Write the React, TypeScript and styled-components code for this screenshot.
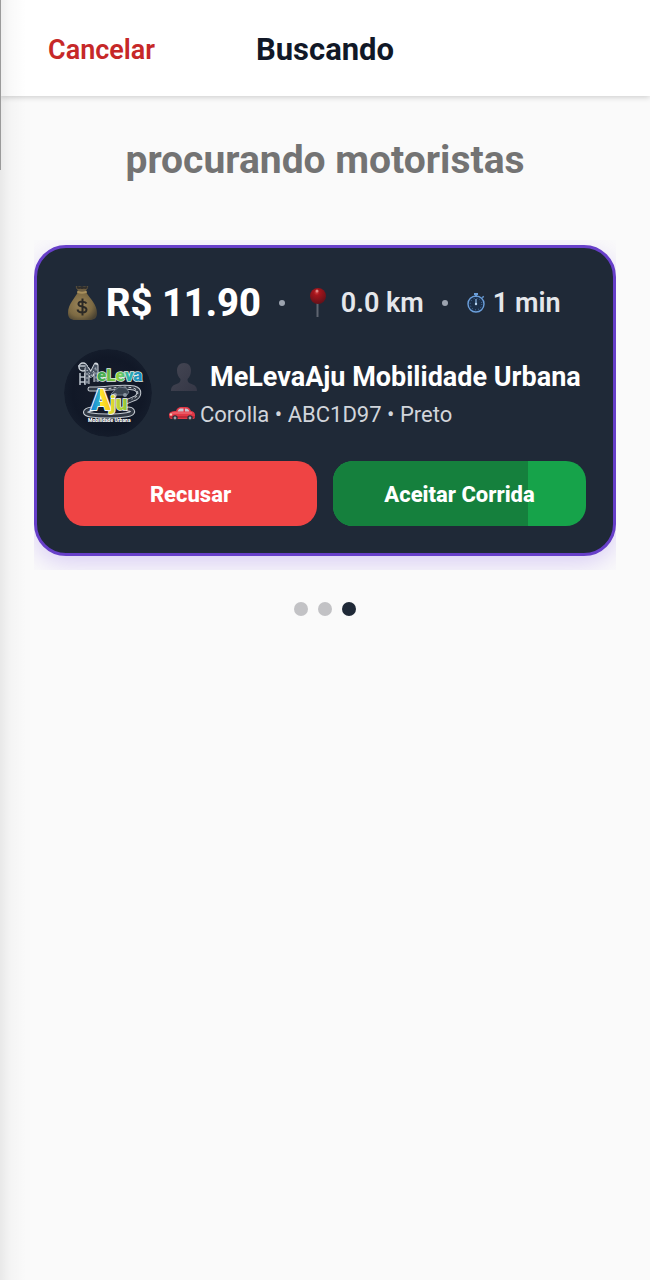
import React from 'react';
import styled, { createGlobalStyle } from 'styled-components';

const ride = {
  price: 'R$ 11.90',
  distance: '0.0 km',
  time: '1 min',
  driver: 'MeLevaAju Mobilidade Urbana',
  vehicle: 'Corolla • ABC1D97 • Preto',
  progress: 77,
};

const App = () => {
  return (
    <>
      <GlobalStyle />
      <Page>
        <Header>
          <CancelButton type="button">Cancelar</CancelButton>
          <HeaderTitle>Buscando</HeaderTitle>
        </Header>
        <Content>
          <SearchTitle>procurando motoristas</SearchTitle>
          <CardSlide>
            <RideCard>
              <SummaryRow>
                <PriceGroup>
                  <MoneyBagIcon />
                  <Price>{ride.price}</Price>
                </PriceGroup>
                <Separator />
                <DistanceGroup>
                  <PinIcon />
                  <Metric>{ride.distance}</Metric>
                </DistanceGroup>
                <Separator />
                <TimeGroup>
                  <StopwatchIcon />
                  <Metric>{ride.time}</Metric>
                </TimeGroup>
              </SummaryRow>
              <DriverRow>
                <DriverLogo />
                <DriverInfo>
                  <NameLine>
                    <PersonIcon />
                    <DriverName>{ride.driver}</DriverName>
                  </NameLine>
                  <VehicleLine>
                    <CarIcon />
                    <span>{ride.vehicle}</span>
                  </VehicleLine>
                </DriverInfo>
              </DriverRow>
              <ActionRow>
                <RefuseButton type="button">Recusar</RefuseButton>
                <AcceptButton type="button">
                  <AcceptProgress style={{ width: `${ride.progress}%` }} />
                  <AcceptLabel>Aceitar Corrida</AcceptLabel>
                </AcceptButton>
              </ActionRow>
            </RideCard>
          </CardSlide>
          <Dots>
            <Dot />
            <Dot />
            <Dot $active />
          </Dots>
        </Content>
        <EdgeShadow />
        <EdgeLine />
      </Page>
    </>
  );
};

export default App;

const MoneyBagIcon = () => (
  <svg width="34" height="38" viewBox="0 0 34 38" aria-hidden="true">
    <defs>
      <radialGradient id="bag" cx="42%" cy="45%" r="65%">
        <stop offset="0" stopColor="#9a8459" />
        <stop offset="0.65" stopColor="#7d6a43" />
        <stop offset="1" stopColor="#4c4433" />
      </radialGradient>
    </defs>
    <path d="M14 8C11 14 4 20 4 29c0 5 3 7 7 7h15c4 0 7-2 7-7 0-9-7-14-11-21z" fill="url(#bag)" />
    <path d="M12 2c2 2 3-1 6 1 3-2 4 1 6-1 1 2-2 3-2 6h-8c0-3-3-4-2-6z" fill="#6c5d41" />
    <path d="M13 3c2 2 3 0 5 1 2-1 4 1 5-1" fill="none" stroke="#2f2d2b" strokeWidth="2" />
    <path d="M14 8c3 1 5 1 8 0" fill="none" stroke="#a8905d" strokeWidth="2" strokeLinecap="round" />
    <path d="M22.500 19.500c-1-2-7-3-8 0-1 4 8 2 8 6 0 4-8 4-9 0M18.500 14.500v17" fill="none" stroke="#2b2925" strokeWidth="2" />
  </svg>
);

const PinIcon = () => (
  <svg width="26" height="34" viewBox="0 0 26 34" aria-hidden="true">
    <defs>
      <radialGradient id="pinHead" cx="42%" cy="28%" r="70%">
        <stop offset="0" stopColor="#d23f40" />
        <stop offset="0.25" stopColor="#a5151b" />
        <stop offset="1" stopColor="#651119" />
      </radialGradient>
    </defs>
    <path d="M14.500 16v15" stroke="#5f6570" strokeWidth="2" />
    <circle cx="15" cy="10" r="8" fill="url(#pinHead)" />
    <circle cx="14" cy="5" r="1.500" fill="#dd8583" />
  </svg>
);

const StopwatchIcon = () => (
  <svg width="20" height="22" viewBox="0 0 20 22" fill="none" aria-hidden="true">
    <circle cx="10" cy="12" r="8" fill="#1b2f4a" stroke="#6b9fdb" strokeWidth="1.400" />
    <path d="M8 2h4M10 2v3M16.500 4.500l1 1" stroke="#6b9fdb" strokeWidth="1.800" />
    <path d="M10 7v5" stroke="#8db8e8" strokeWidth="1.200" />
    <circle cx="10" cy="12" r="1.200" fill="#b9d4f0" />
    <circle cx="10" cy="12" r="5.800" stroke="#5f8ec6" strokeWidth="1" strokeDasharray="0.700 2.337" />
  </svg>
);

const PersonIcon = () => (
  <svg width="30" height="30" viewBox="0 0 30 30" aria-hidden="true">
    <defs>
      <linearGradient id="bust" x1="0" y1="0" x2="1" y2="1">
        <stop offset="0" stopColor="#444653" />
        <stop offset="1" stopColor="#353746" />
      </linearGradient>
    </defs>
    <path
      d="M16 1c-4.500 0-7 3-7 7.500 0 4 1.500 6.500 3.500 8.500 0 3-1 4-4 5C5 23 3 25 3 29h26c0-4-2-6-5.500-7-3-1-4-2-4-5 2-2 3.500-4.500 3.500-8.500C23 4 20.500 1 16 1z"
      fill="url(#bust)"
    />
  </svg>
);

const CarIcon = () => (
  <svg width="28" height="18" viewBox="0 0 28 18" aria-hidden="true">
    <path d="M1 10c0-3 3-4 7-4 1-3 3-4 5-4h5c3 0 4 2 5 4 3 .5 4 2 4 4.500V13c-1 1-2 1-3 1H4c-2 0-3-1-3-4z" fill="#e23846" />
    <path d="M9.500 6.500c1-2.500 2-3 4-3h2v3zM17 3.500c3 0 3.500 1 4.500 3H17z" fill="#c9c5d0" />
    <path d="M4 8h20" stroke="#f27c84" strokeWidth="1" />
    <path d="M1 12h26" stroke="#9a1d2c" strokeWidth="1" />
    <circle cx="7" cy="13" r="2.700" fill="#282c36" />
    <circle cx="7" cy="13" r="1.400" fill="#9ea2aa" />
    <circle cx="22" cy="13" r="2.700" fill="#282c36" />
    <circle cx="22" cy="13" r="1.400" fill="#9ea2aa" />
    <circle cx="3" cy="9.500" r="1.200" fill="#f2c9b8" />
  </svg>
);

const DriverLogo = () => (
  <LogoSvg width="88" height="88" viewBox="0 0 88 88" role="img" aria-label="MeLeva Aju Mobilidade Urbana">
    <defs>
      <radialGradient id="disc">
        <stop offset="0" stopColor="#171d2c" />
        <stop offset="0.8" stopColor="#111827" />
        <stop offset="1" stopColor="#141c2b" />
      </radialGradient>
      <linearGradient id="leva" x1="0" y1="0" x2="1" y2="0">
        <stop offset="0" stopColor="#2e9e57" />
        <stop offset="0.45" stopColor="#8fd03c" />
        <stop offset="0.7" stopColor="#2bb3b0" />
        <stop offset="1" stopColor="#1c7fc4" />
      </linearGradient>
      <linearGradient id="letterA" x1="0" y1="0" x2="1" y2="0">
        <stop offset="0.1" stopColor="#1688d4" />
        <stop offset="0.45" stopColor="#2fb0cf" />
        <stop offset="0.5" stopColor="#ffe62c" />
        <stop offset="1" stopColor="#f7c31c" />
      </linearGradient>
      <linearGradient id="letterJu" x1="0" y1="0" x2="1" y2="0">
        <stop offset="0" stopColor="#f4dc2b" />
        <stop offset="1" stopColor="#8cc63b" />
      </linearGradient>
    </defs>
    <circle cx="44" cy="44" r="44" fill="url(#disc)" />
    {/* road around the lettering */}
    <g fill="none" strokeLinecap="round">
      <path d="M26 40c14 1 32-4 44-1 7 2 6 9-1 11l-7 3M28 60c-8 1-9 5-1 6 12 2 32 1 39-1 5-2 2-5-2-5" stroke="#c4cad1" strokeWidth="5" />
      <path d="M26 40c14 1 32-4 44-1 7 2 6 9-1 11l-7 3M28 60c-8 1-9 5-1 6 12 2 32 1 39-1 5-2 2-5-2-5" stroke="#303844" strokeWidth="3" />
      <path d="M40 40c10-1 20-3 29-1 7 2 6 9-1 11" stroke="#d5d9df" strokeWidth="1" strokeDasharray="2 3" />
    </g>
    {/* driver figure and the road shaped M */}
    <circle cx="19" cy="18" r="4" fill="#313a47" stroke="#cdd3d9" strokeWidth="1.500" />
    <path d="M14 17h10M16 24v12M21 24v12M16 28h5M16 33h5" fill="none" stroke="#b9c1ca" strokeWidth="1.500" />
    <path d="M23 35V20l4 6 5-10v17" fill="none" stroke="#d5dae0" strokeWidth="5" strokeLinejoin="round" />
    <path d="M23 35V20l4 6 5-10v17" fill="none" stroke="#465160" strokeWidth="3" />
    <path d="M23 34V21l4 6 5-9v14" fill="none" stroke="#b6bdc6" strokeWidth="1" strokeDasharray="2 2" />
    <LogoText x="33" y="32" $size={17} fill="url(#leva)" stroke="#e4f2e8" strokeWidth="1.500">
      eLeva
    </LogoText>
    <path d="M47 45l4-4 4-3 7 1 3 4-2 3H48z" fill="#3a4552" stroke="#6d7986" strokeWidth="1" />
    <circle cx="51" cy="46" r="2" fill="#8b96a2" />
    <circle cx="61" cy="46" r="2" fill="#8b96a2" />
    <LogoText x="27" y="61" $size={29} fill="url(#letterA)" stroke="#f1f6f8" strokeWidth="2">
      A
    </LogoText>
    <LogoText x="46" y="61" $size={21} fill="url(#letterJu)" stroke="#f1f6f8" strokeWidth="1.500">
      ju
    </LogoText>
    <LogoText x="24" y="73" $size={5} fill="#ffffff">
      Mobilidade Urbana
    </LogoText>
  </LogoSvg>
);

const GlobalStyle = createGlobalStyle`
  * {
    box-sizing: border-box;
  }

  body {
    margin: 0;
    background-color: #fafafa;
    font-family: Roboto, "Liberation Sans", sans-serif;
  }

  h1, h2, p {
    margin: 0;
  }

  button {
    border: none;
    padding: 0;
    font-family: inherit;
    cursor: pointer;
  }

  svg {
    display: block;
    flex-shrink: 0;
  }
`

const Page = styled.div`
  position: relative;
  width: 100%;
  min-height: 100vh;
  background-color: #fafafa;
`

const Header = styled.header`
  height: 96px;
  padding: 4px 48px 0;
  display: grid;
  grid-template-columns: 1fr auto 1fr;
  align-items: center;
  background-color: #ffffff;
  box-shadow: 0 1px 6px rgba(0, 0, 0, 0.2);
`

const CancelButton = styled.button`
  justify-self: start;
  background: none;
  color: #c62828;
  font-size: 27px;
  font-weight: 600;
  line-height: 32px;
`

const HeaderTitle = styled.h1`
  color: #111827;
  font-size: 31px;
  font-weight: 700;
  line-height: 40px;
`

const Content = styled.main`
  padding: 38px 34px;
`

const SearchTitle = styled.h2`
  color: #737373;
  font-size: 39px;
  font-weight: 700;
  line-height: 52px;
  text-align: center;
`

const CardSlide = styled.section`
  margin-top: 54px;
  padding: 5px 0 14px;
  overflow: hidden;
`

const RideCard = styled.article`
  padding: 27px;
  border: 3px solid #673fc9;
  border-radius: 32px;
  background-color: #1f2937;
  box-shadow: 0 8px 24px rgba(109, 60, 230, 0.22);
`

const SummaryRow = styled.div`
  height: 54px;
  padding-top: 2px;
  display: flex;
  align-items: center;
`

const SummaryGroup = styled.span`
  display: flex;
  align-items: center;
`

const PriceGroup = styled(SummaryGroup)`
  gap: 8px;
`

const DistanceGroup = styled(SummaryGroup)`
  gap: 12px;
`

const TimeGroup = styled(SummaryGroup)`
  gap: 7px;
`

const Price = styled.span`
  color: #ffffff;
  font-size: 38px;
  font-weight: 800;
`

const Metric = styled.span`
  color: #e5e7eb;
  font-size: 27px;
  font-weight: 600;
`

const Separator = styled.span`
  width: 6px;
  height: 6px;
  margin: 0 18px;
  border-radius: 50%;
  background-color: #9ca3af;
`

const DriverRow = styled.div`
  margin-top: 20px;
  display: flex;
  align-items: center;
  gap: 16px;
`

const LogoSvg = styled.svg`
  border-radius: 50%;
`

const LogoText = styled.text<{ $size: number }>`
  font-size: ${({ $size }) => $size}px;
  font-weight: 900;
  paint-order: stroke;
`

const DriverInfo = styled.div`
  min-width: 0;
  padding-top: 2px;
`

const NameLine = styled.div`
  height: 40px;
  display: flex;
  align-items: center;
  gap: 12px;
`

const DriverName = styled.span`
  color: #ffffff;
  font-size: 27px;
  font-weight: 700;
  white-space: nowrap;
`

const VehicleLine = styled.div`
  height: 34px;
  display: flex;
  align-items: center;
  gap: 4px;
  color: #d1d5db;
  font-size: 22px;
`

const ActionRow = styled.div`
  margin-top: 24px;
  display: grid;
  grid-template-columns: 1fr 1fr;
  gap: 16px;
`

const ActionButton = styled.button`
  position: relative;
  height: 65px;
  padding-top: 2px;
  border-radius: 20px;
  overflow: hidden;
  color: #ffffff;
  font-size: 22px;
  font-weight: 800;
`

const RefuseButton = styled(ActionButton)`
  background-color: #ef4444;
`

const AcceptButton = styled(ActionButton)`
  background-color: #16a34a;
`

const AcceptProgress = styled.span`
  position: absolute;
  top: 0;
  bottom: 0;
  left: 0;
  background-color: #15803d;
`

const AcceptLabel = styled.span`
  position: relative;
`

const Dots = styled.div`
  margin-top: 32px;
  display: flex;
  justify-content: center;
  gap: 10px;
`

const Dot = styled.span<{ $active?: boolean }>`
  width: 14px;
  height: 14px;
  border-radius: 50%;
  background-color: ${({ $active }) => ($active ? '#1f2937' : '#c2c2c5')};
`

const EdgeShadow = styled.div`
  position: absolute;
  top: 0;
  bottom: 0;
  left: 0;
  width: 26px;
  background: linear-gradient(to right, rgba(0, 0, 0, 0.07), rgba(0, 0, 0, 0.025) 40%, transparent);
  pointer-events: none;
`

const EdgeLine = styled.div`
  position: absolute;
  top: 0;
  left: 0;
  width: 1px;
  height: 170px;
  background-color: #9a9a9a;
`
